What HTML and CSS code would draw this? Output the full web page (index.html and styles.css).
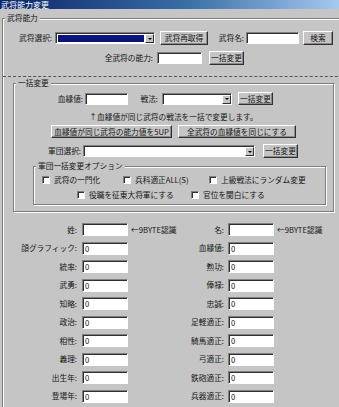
FILE: index.html
```html
<!DOCTYPE html>
<html lang="ja">
<head>
<meta charset="UTF-8" />
<title>武将能力変更</title>
<link rel="stylesheet" href="styles.css">
</head>
<body>
<div class="titlebar">武将能力変更</div>
<fieldset class="group outer">
  <legend>武将能力</legend>
  <div class="row r1">
    <span class="lbl l-busho">武将選択:</span>
    <div class="select s-busho selected"><span class="val"></span><span class="arrow"></span></div>
    <button class="btn b-reget">武将再取得</button>
    <span class="lbl l-name">武将名:</span>
    <input class="txt t-name">
    <button class="btn b-search">検索</button>
  </div>
  <div class="row r2">
    <span class="lbl l-all">全武将の能力:</span>
    <input class="txt t-all">
    <button class="btn b-all">一括変更</button>
  </div>
  <div class="dash"></div>

  <fieldset class="group bulk">
    <legend>一括変更</legend>
    <div class="row r-ketsu">
      <span class="lbl l-ketsu">血縁値:</span>
      <input class="txt t-ketsu">
      <span class="lbl l-senpo">戦法:</span>
      <div class="select s-senpo"><span class="val"></span><span class="arrow"></span></div>
      <button class="btn b-senpo">一括変更</button>
    </div>
    <div class="note">↑血縁値が同じ武将の戦法を一括で変更します。</div>
    <div class="row r-btns">
      <button class="btn b-up">血縁値が同じ武将の能力値を5UP</button>
      <button class="btn b-same">全武将の血縁値を同じにする</button>
    </div>
    <div class="row r-gundan">
      <span class="lbl l-gundan">軍団選択:</span>
      <div class="select s-gundan"><span class="val"></span><span class="arrow"></span></div>
      <button class="btn b-gundan">一括変更</button>
    </div>
    <fieldset class="group opts">
      <legend>軍団一括変更オプション</legend>
      <div class="row r-chk1">
        <label class="chk c1"><input type="checkbox">武将の一門化</label>
        <label class="chk c2"><input type="checkbox">兵科適正ALL(S)</label>
        <label class="chk c3"><input type="checkbox">上級戦法にランダム変更</label>
      </div>
      <div class="row r-chk2">
        <label class="chk c4"><input type="checkbox">役職を征東大将軍にする</label>
        <label class="chk c5"><input type="checkbox">官位を関白にする</label>
      </div>
    </fieldset>
  </fieldset>

  <div class="fields">
    <span class="lbl fl">姓:</span><input class="txt fld"><span class="hint">←9BYTE認識</span>
    <span class="lbl fr">名:</span><input class="txt fld"><span class="hint">←9BYTE認識</span>

    <span class="lbl fl">顔グラフィック:</span><input class="txt fld" value="0"><span></span>
    <span class="lbl fr">血縁値:</span><input class="txt fld" value="0"><span></span>

    <span class="lbl fl">統率:</span><input class="txt fld" value="0"><span></span>
    <span class="lbl fr">勲功:</span><input class="txt fld" value="0"><span></span>

    <span class="lbl fl">武勇:</span><input class="txt fld" value="0"><span></span>
    <span class="lbl fr">俸禄:</span><input class="txt fld" value="0"><span></span>

    <span class="lbl fl">知略:</span><input class="txt fld" value="0"><span></span>
    <span class="lbl fr">忠誠:</span><input class="txt fld" value="0"><span></span>

    <span class="lbl fl">政治:</span><input class="txt fld" value="0"><span></span>
    <span class="lbl fr">足軽適正:</span><input class="txt fld" value="0"><span></span>

    <span class="lbl fl">相性:</span><input class="txt fld" value="0"><span></span>
    <span class="lbl fr">騎馬適正:</span><input class="txt fld" value="0"><span></span>

    <span class="lbl fl">義理:</span><input class="txt fld" value="0"><span></span>
    <span class="lbl fr">弓適正:</span><input class="txt fld" value="0"><span></span>

    <span class="lbl fl">出生年:</span><input class="txt fld" value="0"><span></span>
    <span class="lbl fr">鉄砲適正:</span><input class="txt fld" value="0"><span></span>

    <span class="lbl fl">登場年:</span><input class="txt fld" value="0"><span></span>
    <span class="lbl fr">兵器適正:</span><input class="txt fld" value="0"><span></span>
  </div>
</fieldset>
</body>
</html>
```

FILE: styles.css
```css
html, body {
  margin: 0;
  overflow: hidden;
}
body {
  width: 339px;
  height: 407px;
  background: #c5c5c5;
  color: #151515;
  font-family: "Noto Sans CJK JP", "Noto Sans", sans-serif;
  font-size: 7.7px;
  line-height: 10px;
}
.titlebar {
  height: 9px;
  line-height: 9px;
  padding-left: 1px;
  color: #fff;
  font-size: 8px;
  background: linear-gradient(to right, #0a246a, #3a6ea5 55%, #a6caf0);
}

/* etched group boxes */
.group {
  margin: 0;
  padding: 0;
  min-width: 0;
  border: 1px solid #7d7d7d;
  box-shadow: inset 1px 1px 0 #fff, 1px 1px 0 #fff;
}
.group > legend {
  margin-left: 2px;
  padding: 0 2px;
  line-height: 10px;
  background: #c5c5c5;
}
.outer {
  margin: 4px -30px 0 2px;
  padding-bottom: 40px;
}

/* controls */
.row {
  display: flex;
  align-items: center;
}
.lbl {
  flex: none;
  text-align: right;
  white-space: nowrap;
}
.txt {
  flex: none;
  box-sizing: border-box;
  height: 12px;
  margin: 0;
  padding: 0 0 0 2px;
  border: 1px solid;
  border-color: #808080 #fff #fff #808080;
  box-shadow: inset 1px 1px 0 #303030;
  background: #fff;
  color: #151515;
  font: inherit;
  line-height: 10px;
  outline: none;
}
.btn {
  flex: none;
  box-sizing: border-box;
  height: 14px;
  margin: 0;
  padding: 0;
  border: 1px solid;
  border-color: #fff #303030 #303030 #fff;
  box-shadow: inset -1px -1px 0 #8a8a8a;
  background: #c5c5c5;
  color: #151515;
  font: inherit;
  line-height: 10px;
  white-space: nowrap;
}
.select {
  flex: none;
  display: flex;
  box-sizing: border-box;
  height: 12px;
  border: 1px solid;
  border-color: #808080 #fff #fff #808080;
  box-shadow: inset 1px 1px 0 #303030;
  background: #fff;
}
.select .val {
  flex: 1;
}
.select.selected .val {
  margin: 2px 1px 1px 2px;
  background: #0b1478;
}
.select .arrow {
  display: flex;
  align-items: center;
  justify-content: center;
  box-sizing: border-box;
  width: 9px;
  margin: 1px 0 0;
  border: 1px solid;
  border-color: #fff #303030 #303030 #fff;
  background: #c5c5c5;
}
.select .arrow::after {
  content: "";
  border-left: 2px solid transparent;
  border-right: 2px solid transparent;
  border-top: 2px solid #000;
}

/* top rows */
.r1 { margin-top: 8px; height: 14px; }
.l-busho { width: 49px; }
.s-busho { margin-left: 3px; width: 100px; }
.b-reget { margin-left: 5px; width: 48px; }
.l-name { margin-left: 4px; width: 32px; }
.t-name { margin-left: 2px; width: 53px; }
.b-search { margin-left: 4px; width: 30px; }

.r2 { margin-top: 6px; height: 14px; }
.l-all { width: 150px; }
.t-all { margin-left: 4px; width: 45px; }
.b-all { margin-left: 7px; width: 35px; }

.dash {
  margin-top: 11px;
  border-top: 1px dashed #555;
}

/* bulk change */
.bulk {
  box-sizing: border-box;
  width: 321px;
  margin: 1px 0 0 10px;
  padding-bottom: 2px;
}
.r-ketsu { margin-top: 4px; height: 13px; }
.l-ketsu { width: 69px; }
.t-ketsu { margin-left: 2px; width: 43px; }
.l-senpo { margin-left: 9px; width: 21px; }
.s-senpo { margin-left: 4px; width: 70px; }
.b-senpo { margin-left: 6px; width: 35px; height: 13px; }

.note {
  margin-top: 7px;
  text-align: center;
}
.r-btns {
  margin-top: 3px;
  justify-content: center;
  gap: 6px;
}
.b-up { width: 121px; height: 13px; }
.b-same { width: 118px; height: 13px; }

.r-gundan { margin-top: 6px; height: 14px; }
.l-gundan { width: 67px; }
.s-gundan { margin-left: 2px; width: 172px; }
.b-gundan { margin-left: 8px; width: 35px; }

.opts {
  box-sizing: border-box;
  width: 293px;
  margin: 3px 0 4px 19px;
  padding-bottom: 5px;
}
.r-chk1 { margin-top: 4px; height: 9px; }
.r-chk2 { margin-top: 6px; height: 9px; }
.chk {
  display: flex;
  align-items: center;
  gap: 4px;
  flex: none;
  white-space: nowrap;
}
.chk input {
  appearance: none;
  box-sizing: border-box;
  width: 8px;
  height: 8px;
  margin: 0;
  border: 1px solid;
  border-color: #808080 #fff #fff #808080;
  box-shadow: inset 1px 1px 0 #303030;
  background: #fff;
}
.c1 { margin-left: 8px; width: 81px; }
.c2 { width: 86px; }
.c4 { margin-left: 43px; width: 114px; }

/* ability fields */
.fields {
  display: grid;
  grid-template-columns: 79px 46px 57px 43px 46px 1fr;
  grid-auto-rows: 13px;
  row-gap: 5.5px;
  align-items: center;
  margin-top: 11px;
}
.fl { padding-right: 5px; }
.fr { padding-right: 4px; }
.fld {
  width: 46px;
  height: 13px;
}
.hint {
  padding-left: 3px;
  white-space: nowrap;
}
```
